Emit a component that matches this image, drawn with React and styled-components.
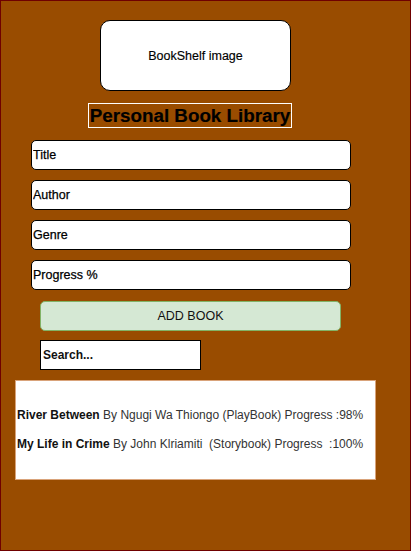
import React, { useState } from "react";
import styled, { createGlobalStyle } from "styled-components";

const GlobalStyle = createGlobalStyle`
  html, body {
    margin: 0;
    padding: 0;
    background: #ffffff;
  }
  * {
    box-sizing: border-box;
  }
`;

const Page = styled.div`
  width: 411px;
  height: 551px;
  border: 1px solid #6f0000;
  background-color: #994c00;
  display: flex;
  flex-direction: column;
  align-items: flex-start;
  font-family: "Liberation Sans", Arial, sans-serif;
  color: #000;
`;

const ImageBox = styled.div`
  margin: 19px 0 0 99px;
  width: 191px;
  height: 71px;
  border: 1px solid #000;
  border-radius: 10px;
  background: #fff;
  display: flex;
  align-items: center;
  justify-content: center;
  font-size: 12.5px;
  color: #000;
  -webkit-text-stroke: 0.15px #000;
`;

const Title = styled.h1`
  margin: 12px 0 0 87px;
  width: 204px;
  height: 25px;
  border: 1px solid #fff;
  display: flex;
  align-items: center;
  justify-content: center;
  white-space: nowrap;
  font-size: 18.8px;
  font-weight: bold;
  color: #000;
  -webkit-text-stroke: 0.2px #000;
`;

const Form = styled.form`
  margin: 12px 0 0 30px;
  display: flex;
  flex-direction: column;
  align-items: flex-start;
  gap: 10px;
`;

const Field = styled.input`
  width: 320px;
  height: 30px;
  padding: 0 0 0 1px;
  border: 1px solid #000;
  border-radius: 5px;
  background: #fff;
  font-family: "Liberation Sans", Arial, sans-serif;
  font-size: 12.5px;
  color: #000;
  outline: none;
  -webkit-text-stroke: 0.25px #000;

  &::placeholder {
    color: #000;
    opacity: 1;
  }
`;

const AddButton = styled.button`
  margin: 1px 0 0 9px;
  width: 301px;
  height: 30px;
  border: 1px solid #82b366;
  border-radius: 5px;
  background: #d5e8d4;
  font-family: "Liberation Sans", Arial, sans-serif;
  font-size: 12.5px;
  color: #111;
  cursor: pointer;
`;

const Search = styled.input`
  margin: 9px 0 0 39px;
  width: 161px;
  height: 30px;
  padding: 0 0 0 2px;
  border: 1.5px solid #000;
  border-radius: 0;
  background: #fff;
  font-family: "Liberation Sans", Arial, sans-serif;
  font-size: 12px;
  font-weight: bold;
  color: #000;
  outline: none;

  &::placeholder {
    color: #111;
    opacity: 1;
  }
`;

const BookList = styled.ul`
  margin: 10px 0 0 14px;
  padding: 0 0 0 1px;
  width: 361px;
  height: 100px;
  list-style: none;
  border: 1px solid #d9a37a;
  background: #fff;
  display: flex;
  flex-direction: column;
  justify-content: center;
`;

const BookRow = styled.li`
  line-height: 29px;
  font-size: 12px;
  color: #333;
  white-space: pre;

  b {
    color: #111;
  }
`;

const books = [
  { title: "River Between", rest: " By Ngugi Wa Thiongo (PlayBook) Progress :98%" },
  { title: "My Life in Crime", rest: " By John Klriamiti  (Storybook) Progress  :100%" },
];

export default function App() {
  const [query, setQuery] = useState("");

  return (
    <>
      <GlobalStyle />
      <Page>
        <ImageBox>BookShelf image</ImageBox>
        <Title>Personal Book Library</Title>
        <Form onSubmit={(e) => e.preventDefault()}>
          <Field placeholder="Title" />
          <Field placeholder="Author" />
          <Field placeholder="Genre" />
          <Field placeholder="Progress %" />
          <AddButton type="submit">ADD BOOK</AddButton>
        </Form>
        <Search
          placeholder="Search..."
          value={query}
          onChange={(e) => setQuery(e.target.value)}
        />
        <BookList>
          {books.map((b) => (
            <BookRow key={b.title}>
              <b>{b.title}</b>
              {b.rest}
            </BookRow>
          ))}
        </BookList>
      </Page>
    </>
  );
}
